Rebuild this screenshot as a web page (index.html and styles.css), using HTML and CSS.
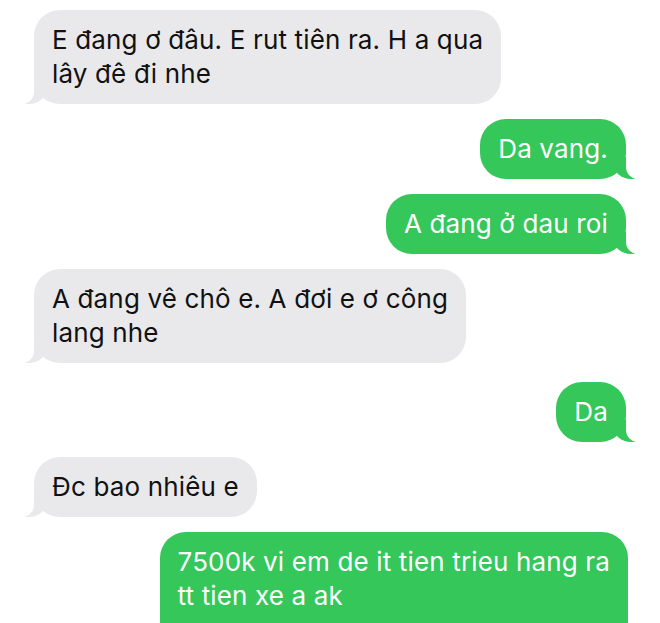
FILE: index.html
```html
<!DOCTYPE html>
<html lang="vi">
<head>
<meta charset="utf-8">
<link rel="stylesheet" href="styles.css">
</head>
<body>
<div class="thread">
  <div class="bubble recv">E đang ơ đâu. E rut tiên ra. H a qua<br>lây đê đi nhe</div>
  <div class="bubble sent">Da vang.</div>
  <div class="bubble sent">A đang ở dau roi</div>
  <div class="bubble recv">A đang vê chô e. A đơi e ơ công<br>lang nhe</div>
  <div class="bubble sent gap-lg">Da</div>
  <div class="bubble recv">Đc bao nhiêu e</div>
  <div class="bubble sent last">7500k vi em de it tien trieu hang ra<br>tt tien xe a ak</div>
</div>
</body>
</html>
```
FILE: styles.css
```css
html, body {
  margin: 0;
  padding: 0;
  background: #ffffff;
}
body {
  width: 660px;
  height: 623px;
  overflow: hidden;
  font-family: "Inter", "Noto Sans", sans-serif;
}
.thread {
  display: flex;
  flex-direction: column;
  gap: 15px;
  padding: 10px 34px 0 34px;
}
.bubble {
  position: relative;
  max-width: 480px;
  padding: 13px 18px;
  border-radius: 26px;
  font-size: 26px;
  line-height: 34px;
  letter-spacing: 0.15px;
  white-space: nowrap;
}
.recv {
  align-self: flex-start;
  background: #e9e9eb;
  color: #111111;
}
.sent {
  align-self: flex-end;
  background: #35c75a;
  color: #ffffff;
}
.recv::before,
.sent::before {
  content: "";
  position: absolute;
  bottom: 0;
  width: 22px;
  height: 22px;
}
.recv::after,
.sent::after {
  content: "";
  position: absolute;
  bottom: 0;
  width: 12px;
  height: 24px;
  background: #ffffff;
}
.recv::before {
  left: -9px;
  background: #e9e9eb;
  border-bottom-right-radius: 18px 16px;
}
.recv::after {
  left: -12px;
  border-bottom-right-radius: 12px;
}
.sent::before {
  right: -9px;
  background: #35c75a;
  border-bottom-left-radius: 18px 16px;
}
.sent::after {
  right: -12px;
  border-bottom-left-radius: 12px;
}
.gap-lg {
  margin-top: 4px;
}
.last {
  margin-right: -2px;
  padding-bottom: 30px;
  border-bottom-left-radius: 0;
  border-bottom-right-radius: 0;
}
.last::before,
.last::after {
  display: none;
}
```
